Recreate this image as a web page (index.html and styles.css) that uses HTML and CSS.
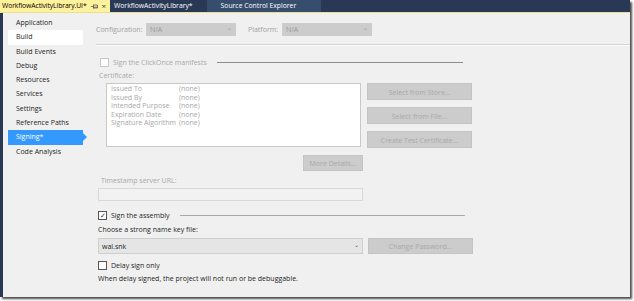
FILE: index.html
```html
<!DOCTYPE html>
<html>
    <head>
        <title>Signing</title>
        <link rel="stylesheet" href="styles.css">
    </head>
    <body>
        <div class="window">
            <div class="tabs">
                <div class="tab active">
                    <span>WorkflowActivityLibrary.UI*</span>
                    <svg class="pin" width="7" height="5" viewBox="0 0 7 5">
                        <path d="M0 2.5H2.5M2.5 0.5V4.5M2.5 1H6.5V4H2.5M2.5 3.2H6.5" stroke="#555" stroke-width="0.8" fill="none"/>
                    </svg>
                    <span class="close">&#215;</span>
                </div>
                <div class="tab">WorkflowActivityLibrary*</div>
                <div class="tab tool">Source Control Explorer</div>
            </div>
            <div class="page">
                <div class="nav">
                    <div class="nav-item">Application</div>
                    <div class="nav-item selected">Build</div>
                    <div class="nav-item">Build Events</div>
                    <div class="nav-item">Debug</div>
                    <div class="nav-item">Resources</div>
                    <div class="nav-item">Services</div>
                    <div class="nav-item">Settings</div>
                    <div class="nav-item">Reference Paths</div>
                    <div class="nav-item current">Signing*</div>
                    <div class="nav-item">Code Analysis</div>
                </div>
                <div class="main">
                    <div class="config">
                        <span class="lbl">Configuration:</span>
                        <div class="combo dis w90"><span>N/A</span><span class="chev">&#8964;</span></div>
                        <span class="lbl plat">Platform:</span>
                        <div class="combo dis w90"><span>N/A</span><span class="chev">&#8964;</span></div>
                    </div>
                    <div class="rule"></div>

                    <div class="section off clickonce">
                        <span class="box"></span>
                        <span>Sign the ClickOnce manifests</span>
                        <span class="line"></span>
                    </div>
                    <div class="off cert-label">Certificate:</div>
                    <div class="cert-row">
                        <div class="cert">
                            <div class="cert-line"><span>Issued To</span><span>(none)</span></div>
                            <div class="cert-line"><span>Issued By</span><span>(none)</span></div>
                            <div class="cert-line"><span>Intended Purpose</span><span>(none)</span></div>
                            <div class="cert-line"><span>Expiration Date</span><span>(none)</span></div>
                            <div class="cert-line"><span>Signature Algorithm</span><span>(none)</span></div>
                        </div>
                        <div class="cert-buttons">
                            <div class="btn">Select from Store...</div>
                            <div class="btn">Select from File...</div>
                            <div class="btn">Create Test Certificate...</div>
                        </div>
                    </div>
                    <div class="details-row">
                        <div class="btn small">More Details...</div>
                    </div>
                    <div class="off stamp-label">Timestamp server URL:</div>
                    <div class="input"></div>

                    <div class="section assembly">
                        <span class="box checked">&#10003;</span>
                        <span>Sign the assembly</span>
                        <span class="line"></span>
                    </div>
                    <div class="key-label">Choose a strong name key file:</div>
                    <div class="key-row">
                        <div class="combo key"><span>wal.snk</span><span class="chev">&#8964;</span></div>
                        <div class="btn">Change Password...</div>
                    </div>
                    <div class="section delay">
                        <span class="box"></span>
                        <span>Delay sign only</span>
                    </div>
                    <div class="note">When delay signed, the project will not run or be debuggable.</div>
                </div>
            </div>
        </div>
    </body>
</html>
```

FILE: styles.css
```css
body {
    margin: 0;
    width: 634px;
    height: 301px;
    background: #ffffff;
    font-family: "Open Sans", "Noto Sans", sans-serif;
    font-size: 7px;
    color: #1e1e1e;
    overflow: hidden;
}
.window {
    width: 630px;
    height: 297px;
    background: #f0f0f0;
    box-shadow: 2px 2px 2px #4a4a4a;
    display: flex;
    flex-direction: column;
}
.tabs {
    height: 12px;
    background: #293955;
    border-bottom: 1px solid #e8df95;
    display: flex;
    align-items: stretch;
}
.tab {
    color: #ffffff;
    padding: 0 4px;
    line-height: 12px;
    white-space: nowrap;
    font-size: 6.8px;
}
.tab.active {
    background: #fff29d;
    color: #000000;
    width: 106px;
    padding: 0 2px;
    display: flex;
    align-items: center;
    letter-spacing: -0.1px;
}
.tab.active .pin {
    margin-left: 4px;
}
.tab.active .close {
    margin-left: 4px;
    color: #333333;
    font-size: 8px;
}
.tab.tool {
    background: #364d6e;
    width: 96px;
    padding-left: 14px;
    margin-left: 10px;
}
.page {
    flex: 1;
    display: flex;
    border-left: 3px solid #293955;
}
.nav {
    width: 87px;
    padding-top: 3px;
}
.nav-item {
    height: 14.3px;
    line-height: 14.3px;
    margin-left: 5px;
    width: 67px;
    padding-left: 8px;
    position: relative;
}
.nav-item.selected {
    background: #ffffff;
}
.nav-item.current {
    background: #3399ff;
    color: #ffffff;
}
.nav-item.current::after {
    content: '';
    position: absolute;
    right: -4px;
    top: 3px;
    border-left: 4px solid #3399ff;
    border-top: 4px solid transparent;
    border-bottom: 4px solid transparent;
}
.main {
    flex: 1;
    padding-left: 6px;
}
.config {
    margin-top: 10px;
    display: flex;
    align-items: center;
    height: 13px;
    color: #a0a0a0;
}
.lbl {
    width: 50px;
}
.lbl.plat {
    width: 34px;
    margin-left: 12px;
}
.combo {
    height: 13px;
    background: #cccccc;
    display: flex;
    justify-content: space-between;
    align-items: center;
    padding: 0 4px;
    box-sizing: border-box;
    color: #999999;
}
.w90 {
    width: 90px;
}
.chev {
    font-size: 6px;
    color: #9a9a9a;
    margin-top: -3px;
}
.rule {
    margin-top: 8px;
    height: 1px;
    background: #d5d5d5;
    border-bottom: 1px solid #fafafa;
}
.section {
    display: flex;
    align-items: center;
    height: 12px;
    margin-left: 2px;
}
.off {
    color: #a8a8a8;
}
.box {
    width: 7px;
    height: 7px;
    border: 1px solid #555555;
    background: #ffffff;
    margin-right: 4px;
    font-size: 7px;
    line-height: 7px;
    text-align: center;
    color: #333333;
}
.off .box {
    border-color: #c8c8c8;
}
.line {
    flex: 1;
    height: 1px;
    background: #a0a0a0;
    margin-left: 10px;
}
.clickonce {
    margin-top: 10px;
    margin-left: 4px;
    width: 363px;
}
.clickonce .line {
    background: #8c8c8c;
}
.cert-label {
    margin-top: 3px;
    margin-left: 3px;
    height: 9px;
    line-height: 9px;
}
.cert-row {
    display: flex;
    margin-top: 3px;
    margin-left: 10px;
}
.cert {
    width: 255px;
    height: 64px;
    background: #ffffff;
    border: 1px solid #c8c8c8;
    padding-top: 1px;
    box-sizing: border-box;
    color: #a8a8a8;
}
.cert-line {
    display: flex;
    height: 8.5px;
    line-height: 8.5px;
    padding-left: 4px;
}
.cert-line span:first-child {
    width: 68px;
}
.cert-buttons {
    margin-left: 6px;
    display: flex;
    flex-direction: column;
    gap: 7px;
}
.btn {
    width: 105px;
    height: 17px;
    line-height: 17px;
    background: #cccccc;
    border: 1px solid #c4c4c4;
    box-sizing: border-box;
    text-align: center;
    color: #a8a8a8;
}
.details-row {
    margin-top: 7px;
    padding-left: 207px;
}
.btn.small {
    width: 60px;
    height: 16px;
    line-height: 16px;
}
.stamp-label {
    margin-top: 5px;
    margin-left: 5px;
    height: 10px;
    line-height: 10px;
}
.input {
    margin-top: 2px;
    margin-left: 2px;
    width: 265px;
    height: 13px;
    border: 1px solid #d8d8d8;
    box-sizing: border-box;
    background: #f2f2f2;
}
.assembly {
    margin-top: 8px;
    width: 367px;
}
.assembly .line {
    background: #a8a8a8;
}
.key-label {
    margin-top: 4px;
    margin-left: 2px;
    height: 10px;
    line-height: 10px;
}
.key-row {
    display: flex;
    margin-top: 3px;
    margin-left: 2px;
    gap: 5px;
}
.combo.key {
    width: 265px;
    height: 16px;
    background: #e5e5e5;
    border: 1px solid #cfcfcf;
    color: #1e1e1e;
    padding: 0 3px;
}
.combo.key .chev {
    color: #555555;
}
.key-row .btn {
    height: 16px;
    line-height: 16px;
}
.delay {
    margin-top: 5px;
}
.note {
    margin-top: 3px;
    margin-left: 2px;
    height: 10px;
    line-height: 10px;
}
```
